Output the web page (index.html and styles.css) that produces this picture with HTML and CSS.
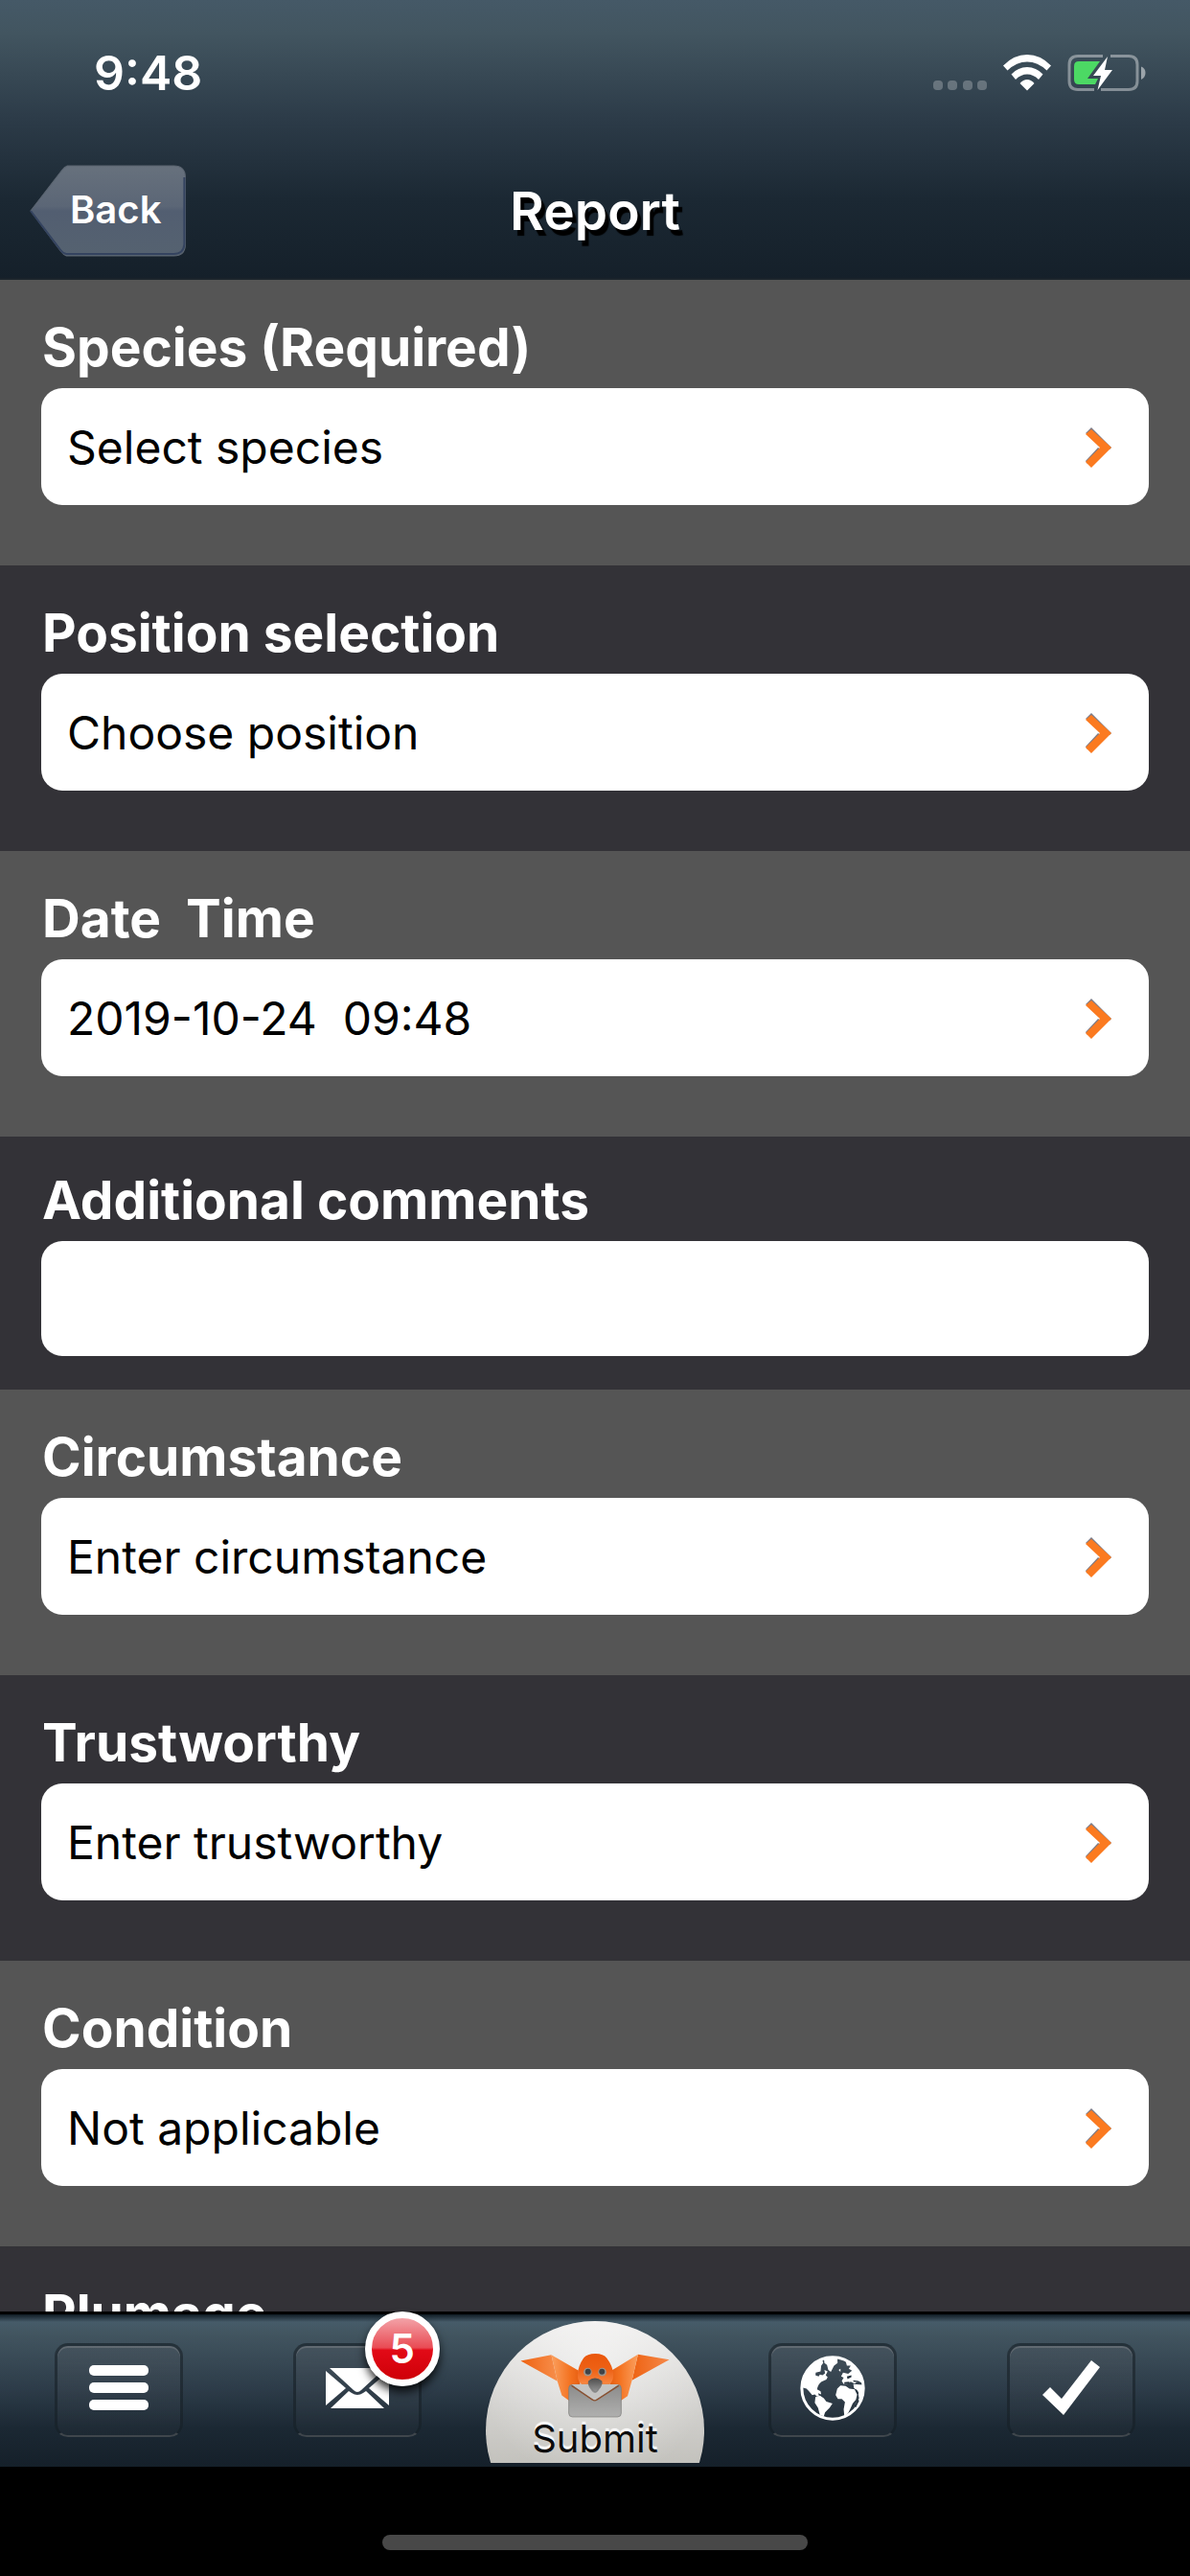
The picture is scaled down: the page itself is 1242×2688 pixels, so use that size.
FILE: index.html
```html
<!DOCTYPE html>
<html lang="en">
<head>
    <meta charset="UTF-8">
    <meta name="viewport" content="width=device-width, initial-scale=1.0">
    <title>Report</title>
    <link rel="stylesheet" href="styles.css">
</head>
<body>
    <header class="header">
        <div class="status">
            <span class="time">9:48</span>
            <svg class="status-icons" width="222" height="40" viewBox="0 0 222 40" aria-hidden="true">
                <g fill="#fff" opacity="0.25">
                    <rect x="0" y="28" width="10" height="10" rx="4"/>
                    <rect x="15" y="28" width="10" height="10" rx="4"/>
                    <rect x="31" y="28" width="10" height="10" rx="4"/>
                    <rect x="46" y="28" width="10" height="10" rx="4"/>
                </g>
                <g transform="translate(73 1)" fill="#fff">
                    <path d="M0 11.500Q11 0 25 0T50 11.500L45.500 16.500Q36 7.500 25 7.500T4.500 16.500Z"/>
                    <path d="M8.500 20.500Q15.500 13 25 13T41.500 20.500L37 26Q31.500 20.500 25 20.500T13 26Z"/>
                    <path d="M17.500 30Q21 26 25 26T32.500 30L25 37.500Z"/>
                </g>
                <path d="M177 2.500H151Q142 2.500 142 11.500V28.500Q142 37.500 151 37.500H168M175 37.500H204Q213 37.500 213 28.500V11.500Q213 2.500 204 2.500H185" fill="none" stroke="#fff" stroke-opacity="0.4" stroke-width="3"/>
                <path d="M217 13.500Q221.500 15 221.500 20T217 27Z" fill="#fff" opacity="0.5"/>
                <path d="M152 8H174L161 26H172L169 32H152Q147 32 147 27V13Q147 8 152 8Z" fill="#4cd964"/>
                <path d="M182 3L167 23H175L171.500 38L187 17H179Z" fill="#fff"/>
            </svg>
        </div>
        <div class="nav">
            <button type="button" class="back">
                <svg class="back-shape" viewBox="0 0 162 96" preserveAspectRatio="none" aria-hidden="true">
                    <defs>
                        <linearGradient id="backFill" x1="0" y1="0" x2="0" y2="1">
                            <stop offset="0" stop-color="#67717d"/>
                            <stop offset="0.45" stop-color="#5b6676"/>
                            <stop offset="0.5" stop-color="#525e71"/>
                            <stop offset="1" stop-color="#556270"/>
                        </linearGradient>
                    </defs>
                    <path d="M39 1H149Q161 1 161 13V83Q161 95 149 95H38Q35 94 32 90L1 48L33 6Q36 2 39 1Z" fill="url(#backFill)" stroke="#5b6571" stroke-width="1"/>
                    <path d="M1 48L32 89Q35 93 38 93H149Q159 93 160 83V13" fill="none" stroke="#34435f" stroke-width="2"/>
                </svg>
                <span class="back-text">Back</span>
            </button>
            <h1 class="title">Report</h1>
        </div>
    </header>

    <main class="form">
        <div class="row">
            <label for="species">Species (Required)</label>
            <button type="button" class="field" id="species">Select species
                <svg class="arrow" viewBox="0 0 30 44"><path d="M7 1L28 22L26 24L1 7Z M14 22L1 36L3 39L17 24Z" fill="#7d7c88"/><path d="M7 3L28 22L7 43L1 37L16 22L1 8Z" fill="#fb7a20"/></svg>
            </button>
        </div>
        <div class="row">
            <label for="position">Position selection</label>
            <button type="button" class="field" id="position">Choose position
                <svg class="arrow" viewBox="0 0 30 44"><path d="M7 1L28 22L26 24L1 7Z M14 22L1 36L3 39L17 24Z" fill="#7d7c88"/><path d="M7 3L28 22L7 43L1 37L16 22L1 8Z" fill="#fb7a20"/></svg>
            </button>
        </div>
        <div class="row">
            <label for="date">Date&nbsp; Time</label>
            <button type="button" class="field" id="date">2019-10-24&nbsp; 09:48
                <svg class="arrow" viewBox="0 0 30 44"><path d="M7 1L28 22L26 24L1 7Z M14 22L1 36L3 39L17 24Z" fill="#7d7c88"/><path d="M7 3L28 22L7 43L1 37L16 22L1 8Z" fill="#fb7a20"/></svg>
            </button>
        </div>
        <div class="row row-comments">
            <label for="comments">Additional comments</label>
            <input type="text" class="field" id="comments">
        </div>
        <div class="row">
            <label for="circumstance">Circumstance</label>
            <button type="button" class="field" id="circumstance">Enter circumstance
                <svg class="arrow" viewBox="0 0 30 44"><path d="M7 1L28 22L26 24L1 7Z M14 22L1 36L3 39L17 24Z" fill="#7d7c88"/><path d="M7 3L28 22L7 43L1 37L16 22L1 8Z" fill="#fb7a20"/></svg>
            </button>
        </div>
        <div class="row">
            <label for="trustworthy">Trustworthy</label>
            <button type="button" class="field" id="trustworthy">Enter trustworthy
                <svg class="arrow" viewBox="0 0 30 44"><path d="M7 1L28 22L26 24L1 7Z M14 22L1 36L3 39L17 24Z" fill="#7d7c88"/><path d="M7 3L28 22L7 43L1 37L16 22L1 8Z" fill="#fb7a20"/></svg>
            </button>
        </div>
        <div class="row">
            <label for="condition">Condition</label>
            <button type="button" class="field" id="condition">Not applicable
                <svg class="arrow" viewBox="0 0 30 44"><path d="M7 1L28 22L26 24L1 7Z M14 22L1 36L3 39L17 24Z" fill="#7d7c88"/><path d="M7 3L28 22L7 43L1 37L16 22L1 8Z" fill="#fb7a20"/></svg>
            </button>
        </div>
        <div class="row">
            <h2 class="row-title">Plumage</h2>
        </div>
    </main>

    <nav class="tabbar">
        <div class="tab">
            <button type="button" class="tab-button" aria-label="Menu">
                <svg width="62" height="48" viewBox="0 0 62 48" fill="#fff">
                    <rect x="0" y="0" width="62" height="11" rx="5"/>
                    <rect x="0" y="18" width="62" height="11" rx="5"/>
                    <rect x="0" y="36" width="62" height="11" rx="5"/>
                </svg>
            </button>
        </div>
        <div class="tab">
            <button type="button" class="tab-button" aria-label="Messages">
                <svg width="68" height="44" viewBox="0 0 68 44" fill="#fff">
                    <path d="M5 1H63L38 24Q34 28 30 24Z"/>
                    <path d="M1 4L22 22L1 40Z"/>
                    <path d="M67 4V40L46 22Z"/>
                    <path d="M6 43L25 25L28 27Q34 31 40 27L43 25L62 43Z"/>
                </svg>
                <span class="badge">5</span>
            </button>
        </div>
        <div class="tab">
            <button type="button" class="submit">
                <svg class="bird" viewBox="248 225 474 206" aria-hidden="true">
                    <defs>
                        <linearGradient id="wingTip" x1="0" y1="0" x2="1" y2="0">
                            <stop offset="0" stop-color="#ee6212"/>
                            <stop offset="1" stop-color="#f78f4c"/>
                        </linearGradient>
                        <linearGradient id="wingTipRight" x1="0" y1="0" x2="1" y2="0">
                            <stop offset="0" stop-color="#ee6212"/>
                            <stop offset="1" stop-color="#f5894a"/>
                        </linearGradient>
                        <linearGradient id="wing" x1="0" y1="0" x2="1" y2="0">
                            <stop offset="0" stop-color="#fba05f"/>
                            <stop offset="0.6" stop-color="#f47321"/>
                            <stop offset="1" stop-color="#e4590d"/>
                        </linearGradient>
                        <linearGradient id="wingRight" x1="1" y1="0" x2="0" y2="0">
                            <stop offset="0" stop-color="#fba05f"/>
                            <stop offset="0.6" stop-color="#f47321"/>
                            <stop offset="1" stop-color="#e4590d"/>
                        </linearGradient>
                        <linearGradient id="head" x1="0" y1="0" x2="0" y2="1">
                            <stop offset="0" stop-color="#ea570c"/>
                            <stop offset="0.5" stop-color="#ee6115"/>
                            <stop offset="1" stop-color="#f98a45"/>
                        </linearGradient>
                        <linearGradient id="beak" x1="0" y1="0" x2="0" y2="1">
                            <stop offset="0" stop-color="#4c4c4c"/>
                            <stop offset="1" stop-color="#9b9b9b"/>
                        </linearGradient>
                        <linearGradient id="letter" x1="0" y1="0" x2="0" y2="1">
                            <stop offset="0" stop-color="#8b8b8a"/>
                            <stop offset="1" stop-color="#b0b0af"/>
                        </linearGradient>
                    </defs>
                    <path d="M250 251L347 232L366 315Z" fill="url(#wingTip)"/>
                    <path d="M720 247L621 230L602 312Z" fill="url(#wingTipRight)"/>
                    <path d="M347 232L432 281L445 378H405L380 360L366 315Z" fill="url(#wing)"/>
                    <path d="M621 230L538 281L525 376H568L588 362L602 312Z" fill="url(#wingRight)"/>
                    <path d="M486 228Q512 228 522 242Q543 270 543 295Q543 318 527 328H446Q430 318 430 295Q430 270 449 242Q460 228 486 228Z" fill="url(#head)"/>
                    <circle cx="462" cy="286" r="13" fill="#a0958c"/>
                    <circle cx="508" cy="286" r="13" fill="#a0958c"/>
                    <circle cx="463" cy="285" r="9" fill="#3f4347"/>
                    <circle cx="507" cy="285" r="9" fill="#3f4347"/>
                    <rect x="402" y="326" width="166" height="102" rx="12" fill="url(#letter)" stroke="#7c7c7a" stroke-width="2"/>
                    <path d="M411 325H560L492 372Q484 378 476 372Z" fill="#c4c4c3"/>
                    <path d="M411 329L476 373Q484 379 492 373L560 329" fill="none" stroke="#8a5232" stroke-width="4"/>
                    <path d="M464 314Q473 305 485 305T507 314Q511 325 499 340Q492 352 485 352T471 340Q460 325 464 314Z" fill="url(#beak)"/>
                    <path d="M472 330Q476 348 485 349T498 330" fill="none" stroke="#7b7b7b" stroke-width="2"/>
                </svg>
                <span>Submit</span>
            </button>
        </div>
        <div class="tab">
            <button type="button" class="tab-button" aria-label="Map">
                <svg width="68" height="68" viewBox="176 239 203 203">
                    <circle cx="277.500" cy="340.500" r="96" fill="none" stroke="#fff" stroke-width="9"/>
                    <path fill="#fff" d="M182 338Q186 300 208 274Q225 256 246 253L248 262L242 270L240 288L225 292L224 300L234 304L238 298L246 300L254 294L252 284L262 288L256 300L262 306L258 314L243 320Q232 328 229 344L240 350L242 360L232 356L236 366H228L222 360L214 362L204 350L196 342L188 340Z"/>
                    <path fill="#fff" d="M250 246L292 243L293 262L282 270L272 290L264 284L260 268L252 262Z"/>
                    <path fill="#fff" d="M224 368L238 364L250 372L258 382L277 388L268 402L254 416L250 428L238 424L232 402L222 386Z"/>
                    <path fill="#fff" d="M292 342L302 332L318 334L330 342L346 344L354 360L350 376L340 388L334 402L326 418L314 428L312 406L316 384L306 374L294 374L287 362Z"/>
                    <path fill="#fff" d="M318 256L340 268Q364 288 372 326L358 318L346 326L334 320L324 326L312 328L306 318L312 308L304 304L310 292L326 296L338 286L328 280L334 270L322 270Z"/>
                    <path fill="#fff" d="M342 328L370 330L372 350Q368 382 352 402L344 398L360 372L356 350L344 340Z"/>
                    <path fill="#fff" d="M206 344L218 340L228 350L222 356L210 352ZM296 284L302 280V290Z"/>
                    <path fill="#26333e" d="M322 304L336 300V306L324 312ZM342 316L358 318L356 322L342 320ZM314 322L330 320L328 326L314 328ZM348 346L352 344L359 356L354 360ZM342 398L350 388L356 374L360 380L350 400Z"/>
                </svg>
            </button>
        </div>
        <div class="tab">
            <button type="button" class="tab-button" aria-label="Done">
                <svg width="60" height="58" viewBox="0 0 60 58" fill="#fff">
                    <path d="M0 36L8 28L20 40L51 0L60 7L22 57Z"/>
                </svg>
            </button>
        </div>
    </nav>
    <footer class="home">
        <div class="home-bar"></div>
    </footer>
</body>
</html>
```
FILE: styles.css
```css
* {
    box-sizing: border-box;
}
body {
    margin: 0;
    height: 100vh;
    display: flex;
    flex-direction: column;
    overflow: hidden;
    background: #000;
    color: #fff;
    font-family: Inter, "Liberation Sans", sans-serif;
}
button, input {
    font: inherit;
    border: none;
    margin: 0;
    padding: 0;
}
button {
    cursor: pointer;
}

/* header */
.header {
    background: linear-gradient(#455967, #425560 12%, #2c3b48 43%, #1b2833 72%, #15202a);
    border-bottom: 2px solid #1b242c;
}
.status {
    display: flex;
    justify-content: space-between;
    align-items: center;
    padding: 46px 46px 42px 98px;
}
.time {
    font-size: 50px;
    font-weight: 600;
    line-height: 60px;
}
.nav {
    display: grid;
    grid-template-columns: 1fr auto 1fr;
    align-items: center;
    padding: 24px 31px 22px;
}
.back {
    position: relative;
    justify-self: start;
    padding: 23px 26px 25px 42px;
    background: none;
    color: #fff;
    font-size: 40px;
    font-weight: 600;
    line-height: 48px;
}
.back-shape {
    position: absolute;
    inset: 0;
    width: 100%;
    height: 100%;
}
.back-text {
    position: relative;
}
.title {
    margin: 0;
    font-size: 55px;
    font-weight: 600;
    line-height: 64px;
    text-shadow: 4px 6px 1px #000;
}

/* form */
.form {
    flex: 1;
    min-height: 0;
    overflow-y: auto;
    scrollbar-width: none;
}
.row {
    padding: 38px 43px 63px;
    background: #555;
}
.row:nth-child(even) {
    background: #333237;
}
.row-comments {
    padding-top: 34px;
    padding-bottom: 35px;
}
label, .row-title {
    display: block;
    margin: 0 0 11px;
    padding-left: 1px;
    font-size: 55px;
    font-weight: 700;
    line-height: 64px;
}
.field {
    display: flex;
    justify-content: space-between;
    align-items: center;
    width: 100%;
    padding: 32px 37px 30px 27px;
    border-radius: 22px;
    background: #fff;
    color: #000;
    font-size: 48px;
    line-height: 60px;
    text-align: left;
}
.row-comments .field {
    padding: 30px 27px;
}
.arrow {
    width: 30px;
    height: 44px;
}

/* tab bar */
.tabbar {
    display: flex;
    align-items: flex-start;
    padding: 7px 0 4px;
    border-top: 3px solid #000;
    background: linear-gradient(#101c24, #465b69 8px, #425560 20px, #2c3b48 50%, #1b2833 75%, #15202a);
}
.tab {
    flex: 1;
    display: flex;
    justify-content: center;
}
.tab-button {
    position: relative;
    display: flex;
    justify-content: center;
    align-items: center;
    width: 134px;
    height: 98px;
    margin-top: 23px;
    padding-bottom: 5px;
    border: 3px solid rgba(20, 30, 38, 0.6);
    border-bottom: 2px solid #3f464c;
    border-radius: 14px;
    background: linear-gradient(rgba(100, 100, 105, 0.2), rgba(60, 65, 70, 0.1));
    box-shadow: inset 0 2px 0 rgba(140, 140, 145, 0.4);
}
.badge {
    position: absolute;
    top: -36px;
    right: -22px;
    width: 78px;
    height: 78px;
    border: 7px solid #fff;
    border-radius: 50%;
    background: linear-gradient(#f3a3a8, #e94b54 48%, #e20a17 52%, #cf0008);
    box-shadow: 0 6px 10px rgba(0, 0, 0, 0.8);
    color: #fff;
    font-size: 42px;
    font-weight: 600;
    line-height: 64px;
    text-align: center;
}
.submit {
    display: flex;
    flex-direction: column;
    align-items: center;
    width: 228px;
    padding: 33px 0 3px;
    background: radial-gradient(circle at 50% 30%, rgba(255, 255, 255, 0.5), transparent 80%), linear-gradient(#eeedec, #d2d1ce 60%, #c3c2bd);
    clip-path: circle(114px at 50% 114px);
    color: #0c0c0c;
    font-size: 40px;
    line-height: 44px;
    text-shadow: 0 -3px 1px #fff;
}
.bird {
    width: 158px;
    height: 68px;
}

/* home indicator */
.home {
    display: flex;
    justify-content: center;
    padding: 71px 0 27px;
    background: #000;
}
.home-bar {
    width: 444px;
    height: 16px;
    border-radius: 8px;
    background: #484848;
}
```
